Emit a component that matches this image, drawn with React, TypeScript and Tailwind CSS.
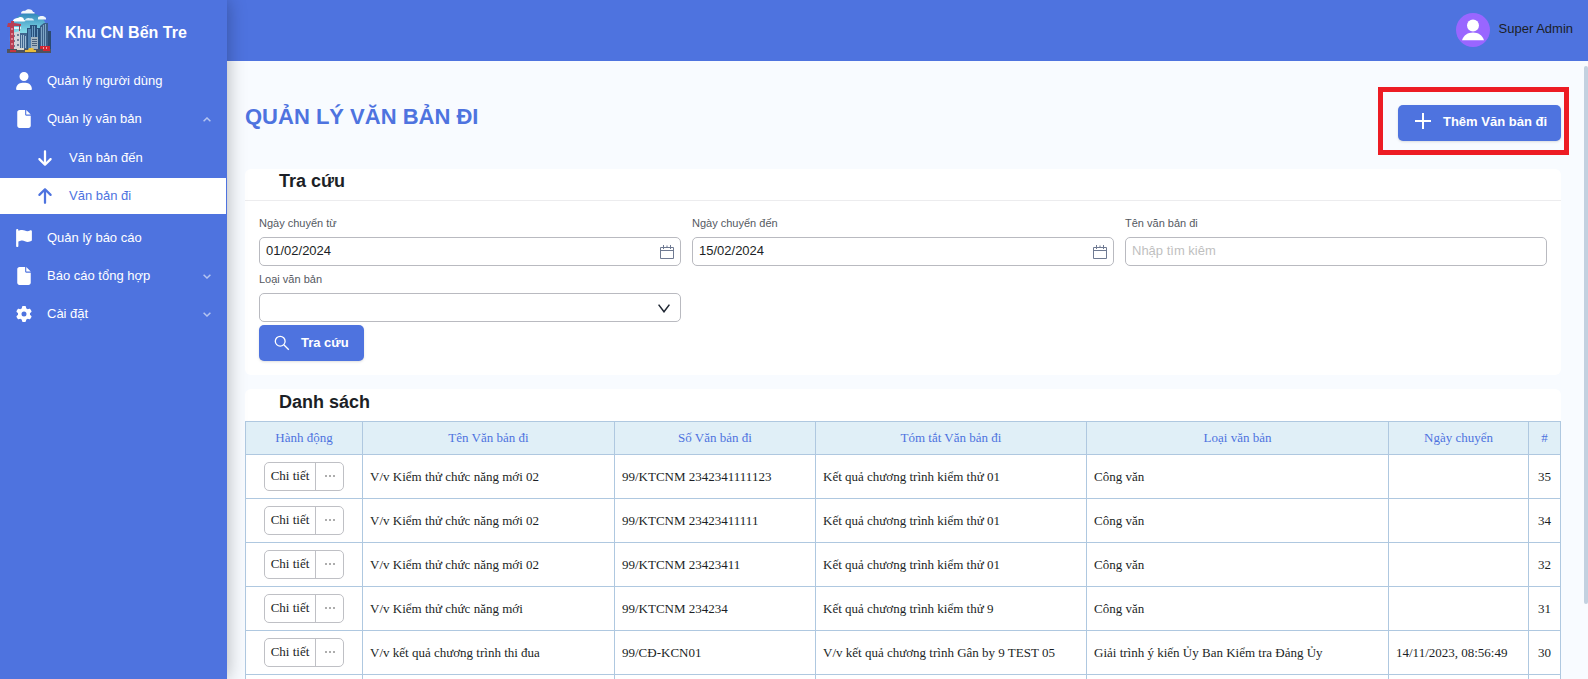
import { useState } from 'react';
import type { ReactNode } from 'react';
import clsx from 'clsx';
import { FaArrowDown, FaArrowUp, FaFile, FaFlag, FaGear, FaUser } from 'react-icons/fa6';

const columns = [
  { label: 'Hành động', width: 'w-[117px]' },
  { label: 'Tên Văn bản đi', width: 'w-[252px]' },
  { label: 'Số Văn bản đi', width: 'w-[201px]' },
  { label: 'Tóm tắt Văn bản đi', width: 'w-[271px]' },
  { label: 'Loại văn bản', width: 'w-[302px]' },
  { label: 'Ngày chuyển', width: 'w-[140px]' },
  { label: '#', width: 'w-[32px]' },
];

const documents = [
  { id: 35, name: 'V/v Kiểm thử chức năng mới 02', code: '99/KTCNM 2342341111123', summary: 'Kết quả chương trình kiểm thử 01', type: 'Công văn', date: '' },
  { id: 34, name: 'V/v Kiểm thử chức năng mới 02', code: '99/KTCNM 23423411111', summary: 'Kết quả chương trình kiểm thử 01', type: 'Công văn', date: '' },
  { id: 32, name: 'V/v Kiểm thử chức năng mới 02', code: '99/KTCNM 23423411', summary: 'Kết quả chương trình kiểm thử 01', type: 'Công văn', date: '' },
  { id: 31, name: 'V/v Kiểm thử chức năng mới', code: '99/KTCNM 234234', summary: 'Kết quả chương trình kiểm thử 9', type: 'Công văn', date: '' },
  { id: 30, name: 'V/v kết quả chương trình thi đua', code: '99/CĐ-KCN01', summary: 'V/v kết quả chương trình Gân by 9 TEST 05', type: 'Giải trình ý kiến Ủy Ban Kiểm tra Đảng Ủy', date: '14/11/2023, 08:56:49' },
];

function Logo() {
  return (
    <svg viewBox="0 0 44 44" className="h-11 w-11 shrink-0" aria-hidden="true">
      <defs>
        <linearGradient id="sky" x1="0" y1="0" x2="0" y2="1">
          <stop offset="0" stopColor="#2f86b8" />
          <stop offset="0.6" stopColor="#7fd6e6" />
          <stop offset="1" stopColor="#9fe3ea" />
        </linearGradient>
      </defs>
      <path d="M3 34C2 14 9 4 22 4s20 9 19 30z" fill="url(#sky)" />
      <path d="M14 4.500c0-2 2-3 4-2.500 2-3 8-2 8 1 2 0 2 1.500 1 1.500H14z" fill="#f2f6fb" />
      <path d="M6 12c0-2 3-3 5-3 2-2 6-1 6 2 2 0 2 1.500 0 1.500H7z" fill="#fff" />
      <path d="M18 11.500c0-2 3-3 5-2 2-1 4 1 4 2z" fill="#d9eef8" />
      <path d="M31 8.500c1-2 7-2 7 0h1v2h-8z" fill="#eef6fb" />
      <path d="M6 18h8v2H6z" fill="#ddf3f8" />
      <path d="M20 19h3v-3h7v3h3v22H20z" fill="#28517c" />
      <path d="M21 20h3v20h-3z" fill="#4f80ae" />
      <path d="M25 17h1v12h-1zM27 17h1v12h-1zM30 20h1v20h-1z" fill="#6b9bc2" />
      <path d="M33 17l4-3h4v27h-8z" fill="#3b5f88" />
      <path d="M34 18h1v21h-1zM36 16h1v23h-1zM38 15h1v23h-1z" fill="#7fa5c5" />
      <path d="M41 22h3v19h-3z" fill="#2b4a70" />
      <path d="M5 24l8-2v19H5z" fill="#d3d4dc" />
      <path d="M6 26h2v2H6zM10 25h2v2h-2zM6 31h2v2H6zM10 30h2v2h-2zM6 36h2v2H6zM10 35h2v2h-2z" fill="#6f7f98" />
      <path d="M13 24h7v17h-7z" fill="#41668f" />
      <path d="M14 26h1v13h-1zM16 26h1v13h-1zM18 27h1v12h-1z" fill="#9fbcd5" />
      <path d="M24 28h7v13h-7z" fill="#a3b4bf" />
      <path d="M25 30h5v1h-5zM25 32h5v1h-5zM25 34h5v1h-5zM25 36h5v1h-5z" fill="#49607b" />
      <path d="M1 14h3v-2h3v2l7 1v2H7v24H3V18H0z" fill="#b83e55" />
      <path d="M4 19h2v2H4zM4 24h2v2H4zM4 29h2v2H4zM4 34h2v2H4z" fill="#dd7f8e" />
      <path d="M12 16h1v6h-1z" fill="#8f4352" />
      <path d="M0 40h44v4H0z" fill="#50535d" />
      <path d="M18 41h3l1-2h4l1 2h2v2H18z" fill="#e9bd3b" />
      <path d="M33 37h10v5h-7v-2h-3z" fill="#d32530" />
      <path d="M36 38h1v2h-1zM39 38h1v2h-1z" fill="#f4a5a5" />
      <path d="M3 41h6v2H3z" fill="#c7353f" />
      <path d="M10 39h7v2h-7z" fill="#dcd9cf" />
    </svg>
  );
}

function Chevron({ open }: { open?: boolean }) {
  return (
    <svg viewBox="0 0 8 5" className="h-[5px] w-2 shrink-0" fill="none" stroke="#b4c4f0" strokeWidth="1.5" aria-hidden="true">
      <path d={open ? 'M0.6 4.300L4 1l3.400 3.300' : 'M0.6 0.700L4 4l3.400-3.300'} />
    </svg>
  );
}

function CalendarIcon() {
  return (
    <svg viewBox="0 0 14 14" className="h-3.5 w-3.5" fill="none" stroke="#6f7a92" aria-hidden="true">
      <path d="M0.5 2.500h13v11H0.5zM0.500 5.500h13M3.500 0v4M10.500 0v4M7 0.500v2" />
    </svg>
  );
}

function MenuItem({ icon, label, chevron }: { icon: ReactNode; label: string; chevron?: 'up' | 'down' }) {
  return (
    <a href="#" className="flex h-9 items-center px-4">
      <span className="flex w-4 justify-center text-lg">{icon}</span>
      <span className="ml-[15px] flex-1">{label}</span>
      {chevron && <Chevron open={chevron === 'up'} />}
    </a>
  );
}

function SubItem({ icon, label, active }: { icon: ReactNode; label: string; active?: boolean }) {
  return (
    <a
      href="#"
      className={clsx('mr-px flex h-9 items-center pl-9', active && 'bg-white text-[#4e73df]')}
    >
      <span className="flex w-[18px] justify-center text-lg">{icon}</span>
      <span className="ml-[15px]">{label}</span>
    </a>
  );
}

function DateField({ id, label, initial }: { id: string; label: string; initial: string }) {
  const [value, setValue] = useState(initial);
  return (
    <div>
      <label htmlFor={id} className="block h-[22px] text-[11px] leading-4 text-[#55595f]">{label}</label>
      <div className="flex h-[29px] items-center rounded-[5px] border border-[#b9bac0] pr-1.5">
        <input
          id={id}
          value={value}
          onChange={(e) => setValue(e.target.value)}
          className="h-full min-w-0 flex-1 rounded-[5px] pb-0.5 pl-1.5 text-[13px] outline-none"
        />
        <button type="button" aria-label={label}><CalendarIcon /></button>
      </div>
    </div>
  );
}

function Sidebar() {
  return (
    <aside className="z-10 w-[227px] shrink-0 bg-[#4e73df] text-[13px] text-white shadow-[0_0_18px_rgba(0,0,0,0.3)]">
      <div className="flex h-[61px] items-center pl-[7px]">
        <Logo />
        <span className="ml-3.5 pt-1 text-base font-bold">Khu CN Bến Tre</span>
      </div>
      <nav className="flex flex-col gap-0.5 pt-0.5">
        <MenuItem icon={<FaUser />} label="Quản lý người dùng" />
        <MenuItem icon={<FaFile />} label="Quản lý văn bản" chevron="up" />
        <div className="mt-px mb-1 flex flex-col gap-0.5">
          <SubItem icon={<FaArrowDown />} label="Văn bản đến" />
          <SubItem icon={<FaArrowUp />} label="Văn bản đi" active />
        </div>
        <MenuItem icon={<FaFlag />} label="Quản lý báo cáo" />
        <MenuItem icon={<FaFile />} label="Báo cáo tổng hợp" chevron="down" />
        <MenuItem icon={<FaGear />} label="Cài đặt" chevron="down" />
      </nav>
    </aside>
  );
}

function SearchCard() {
  return (
    <section className="rounded-md bg-white">
      <h2 className="h-8 border-b border-[#ececee] pl-[34px] text-lg leading-6 font-bold">Tra cứu</h2>
      <form className="p-3.5" onSubmit={(e) => e.preventDefault()}>
        <div className="grid grid-cols-3 gap-x-[11px] gap-y-[5px]">
          <DateField id="from" label="Ngày chuyển từ" initial="01/02/2024" />
          <DateField id="to" label="Ngày chuyển đến" initial="15/02/2024" />
          <div>
            <label htmlFor="name" className="block h-[22px] text-[11px] leading-4 text-[#55595f]">Tên văn bản đi</label>
            <input
              id="name"
              placeholder="Nhập tìm kiêm"
              className="h-[29px] w-full rounded-[5px] border border-[#b9bac0] px-1.5 pb-0.5 text-[13px] outline-none placeholder:text-[#bfbfbf]"
            />
          </div>
          <div>
            <label htmlFor="type" className="block h-[22px] text-[11px] leading-4 text-[#55595f]">Loại văn bản</label>
            <div className="relative">
              <select id="type" className="block h-[29px] w-full appearance-none rounded-[5px] border border-[#b9bac0] bg-white px-1.5 text-[13px]">
                <option value="" />
              </select>
              <svg viewBox="0 0 12 9" className="pointer-events-none absolute top-[11px] right-[11px] h-[9px] w-3" fill="none" stroke="#1f2733" strokeWidth="1.5" aria-hidden="true">
                <path d="M0.6 0.600L6 7.800l5.400-7.200" />
              </svg>
            </div>
          </div>
        </div>
        <button type="submit" className="mt-[3px] flex h-9 items-center rounded-[5px] bg-[#4e73df] px-[15px] text-[13px] font-bold text-white shadow-sm">
          <svg viewBox="0 0 16 16" className="mr-[11px] h-4 w-4" fill="none" stroke="currentColor" strokeWidth="1.3" aria-hidden="true">
            <circle cx="6.2" cy="6.2" r="4.9" />
            <path d="M9.8 9.8l5 5" />
          </svg>
          Tra cứu
        </button>
      </form>
    </section>
  );
}

function DocumentTable() {
  return (
    <table className="w-full table-fixed border-collapse font-['Liberation_Serif','Times_New_Roman',serif] text-[13px]">
      <thead>
        <tr className="h-[33px] bg-[#e0eff7] text-[#4e73df]">
          {columns.map((col) => (
            <th key={col.label} scope="col" className={clsx('border border-[#afc8e0] font-normal', col.width)}>{col.label}</th>
          ))}
        </tr>
      </thead>
      <tbody>
        {documents.map((doc) => (
          <tr key={doc.id} className="h-11">
            <td className="border border-[#afc8e0]">
              <div className="mx-auto flex h-[29px] w-20 rounded-[5px] border border-[#bfc0c5]">
                <button type="button" className="flex-1 border-r border-[#bfc0c5] pb-0.5 whitespace-nowrap">Chi tiết</button>
                <button type="button" aria-label="Thao tác khác" className="flex w-[27px] items-center justify-center pb-0.5">
                  <svg viewBox="0 0 10 2" className="h-0.5 w-2.5" fill="#444" aria-hidden="true">
                    <circle cx="1" cy="1" r="0.8" />
                    <circle cx="5" cy="1" r="0.8" />
                    <circle cx="9" cy="1" r="0.8" />
                  </svg>
                </button>
              </div>
            </td>
            <td className="border border-[#afc8e0] px-[7px]">{doc.name}</td>
            <td className="border border-[#afc8e0] px-[7px]">{doc.code}</td>
            <td className="border border-[#afc8e0] px-[7px]">{doc.summary}</td>
            <td className="border border-[#afc8e0] px-[7px]">{doc.type}</td>
            <td className="border border-[#afc8e0] px-[7px]">{doc.date}</td>
            <td className="border border-[#afc8e0] text-center">{doc.id}</td>
          </tr>
        ))}
        <tr className="h-11">
          {columns.map((col) => (
            <td key={col.label} className="border border-[#afc8e0]" />
          ))}
        </tr>
      </tbody>
    </table>
  );
}

export default function App() {
  return (
    <div className="flex h-screen overflow-hidden bg-[#f8fbff] font-['Liberation_Sans',Arial,sans-serif] text-[#1c1f26]">
      <Sidebar />
      <div className="flex min-w-0 flex-1 flex-col">
        <header className="flex h-[61px] shrink-0 items-center justify-end bg-[#4e73df] pr-[15px] pb-0.5 text-[13px]">
          <svg viewBox="0 0 34 34" className="mr-[9px] h-[34px] w-[34px]" aria-hidden="true">
            <circle cx="17" cy="17" r="17" fill="#9966ff" />
            <circle cx="17" cy="12.5" r="6" fill="#fff" />
            <path d="M6 27.200c1.500-5 6-7.700 11-7.700s9.500 2.700 11 7.700z" fill="#fff" />
          </svg>
          <span className="pb-0.5">Super Admin</span>
        </header>

        {/* Content */}
        <main className="relative flex-1 overflow-hidden pr-[27px] pl-[18px]">
          <div className="flex items-start justify-between pt-11 pb-7">
            <h1 className="text-[22px] leading-6 font-bold text-[#4e73df]">QUẢN LÝ VĂN BẢN ĐI</h1>
            <div className="relative">
              <button type="button" className="flex h-9 items-center rounded-[5px] bg-[#4e73df] pr-3.5 pl-[17px] text-[13px] font-bold text-white shadow-sm">
                <svg viewBox="0 0 16 16" className="mr-3 mb-1 h-4 w-4" stroke="currentColor" strokeWidth="2" aria-hidden="true">
                  <path d="M8 0v16M0 8h16" />
                </svg>
                <span className="pb-0.5">Thêm Văn bản đi</span>
              </button>
              <div className="pointer-events-none absolute -top-[18px] -right-2 -bottom-[14px] -left-5 border-5 border-[#ed1c24]" />
            </div>
          </div>

          <SearchCard />

          <section className="mt-3.5 rounded-md bg-white">
            <h2 className="h-8 pl-[34px] text-lg leading-[26px] font-bold">Danh sách</h2>
            <DocumentTable />
          </section>

          {/* Scroll thumb */}
          <div className="absolute top-[5px] right-0 h-[87%] w-1 rounded-sm bg-[#c3d1e0]" />
        </main>
      </div>
    </div>
  );
}
